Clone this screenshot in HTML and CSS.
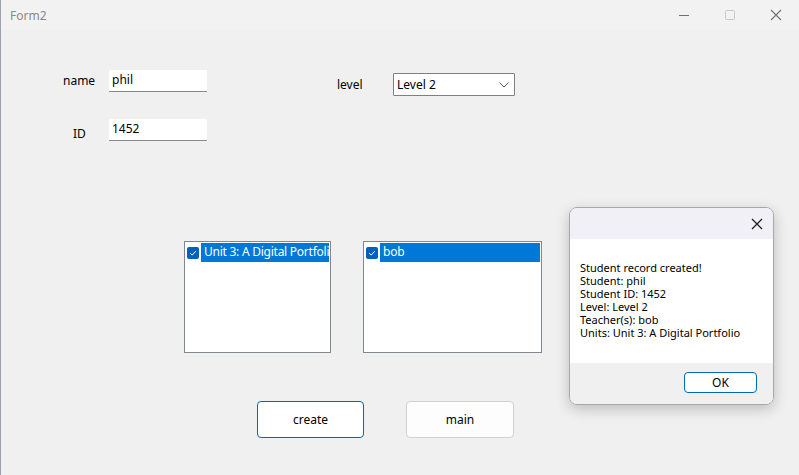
FILE: index.html
```html
<!DOCTYPE html>
<html>
<head>
<meta charset="utf-8">
<link rel="stylesheet" href="styles.css">
</head>
<body>
<div class="window">
  <div class="titlebar">
    <span class="title">Form2</span>
    <div class="controls">
      <span class="ctl"><svg width="12" height="12" viewBox="0 0 12 12"><path d="M1 6.5h10" stroke="#707070" stroke-width="1"/></svg></span>
      <span class="ctl"><svg width="12" height="12" viewBox="0 0 12 12"><rect x="1.5" y="1.5" width="9" height="9" rx="1" fill="none" stroke="#c8c8c8" stroke-width="1"/></svg></span>
      <span class="ctl"><svg width="12" height="12" viewBox="0 0 12 12"><path d="M1 1L11 11M11 1L1 11" stroke="#707070" stroke-width="1.1"/></svg></span>
    </div>
  </div>
  <div class="client">
    <div class="fields">
      <div class="left-col">
        <div class="row">
          <span class="label lbl-name">name</span>
          <div class="textbox">phil</div>
        </div>
        <div class="row row-id">
          <span class="label lbl-id">ID</span>
          <div class="textbox">1452</div>
        </div>
      </div>
      <div class="level-group">
        <span class="label lbl-level">level</span>
        <div class="combo">
          <span>Level 2</span>
          <svg class="chev" width="10" height="6" viewBox="0 0 10 6"><path d="M0.5 0.5L5 5L9.5 0.5" fill="none" stroke="#505050" stroke-width="1"/></svg>
        </div>
      </div>
    </div>
    <div class="lists">
      <div class="listbox lb-units">
        <div class="item">
          <span class="check"><svg width="12" height="12" viewBox="0 0 12 12"><path d="M3.2 6.2L5.2 8.1L8.8 4.2" fill="none" stroke="#fff" stroke-width="1"/></svg></span>
          <span class="item-text">Unit 3: A Digital Portfolio</span>
        </div>
      </div>
      <div class="listbox lb-teachers">
        <div class="item">
          <span class="check"><svg width="12" height="12" viewBox="0 0 12 12"><path d="M3.2 6.2L5.2 8.1L8.8 4.2" fill="none" stroke="#fff" stroke-width="1"/></svg></span>
          <span class="item-text">bob</span>
        </div>
      </div>
    </div>
    <div class="buttons">
      <button class="btn btn-primary">create</button>
      <button class="btn btn-main">main</button>
    </div>
  </div>
  <div class="dialog">
    <div class="dlg-head">
      <svg width="12" height="12" viewBox="0 0 12 12"><path d="M1 1L11 11M11 1L1 11" stroke="#1a1a1a" stroke-width="1.2"/></svg>
    </div>
    <div class="dlg-body">
      <div class="msg">Student record created!</div>
      <div class="msg">Student: phil</div>
      <div class="msg">Student ID: 1452</div>
      <div class="msg">Level: Level 2</div>
      <div class="msg">Teacher(s): bob</div>
      <div class="msg">Units: Unit 3: A Digital Portfolio</div>
    </div>
    <div class="dlg-foot">
      <button class="ok">OK</button>
    </div>
  </div>
</div>
</body>
</html>
```

FILE: styles.css
```css
* { box-sizing: border-box; }
html, body {
  margin: 0;
  padding: 0;
  width: 799px;
  height: 475px;
  overflow: hidden;
  background: #f0f0f0;
  font-family: "Noto Sans", "Open Sans", sans-serif;
  font-size: 12px;
  color: #000;
}
.window {
  position: relative;
  width: 799px;
  height: 475px;
  background: #f0f0f0;
  border-left: 1px solid #9aa3ad;
}
.titlebar {
  height: 30px;
  display: flex;
  align-items: center;
  justify-content: space-between;
  background: #f2f2f2;
}
.title {
  padding-left: 9px;
  color: #8a8a8a;
  font-size: 12px;
}
.controls {
  display: flex;
  height: 30px;
}
.ctl {
  width: 46px;
  display: flex;
  align-items: center;
  justify-content: center;
}
.client {
  display: flex;
  flex-direction: column;
}
.fields {
  display: flex;
  margin-top: 40px;
}
.left-col {
  display: flex;
  flex-direction: column;
  gap: 27px;
}
.row {
  display: flex;
  align-items: center;
}
.label {
  font-size: 12px;
  line-height: 14px;
}
.lbl-name { margin-left: 62px; width: 46px; }
.lbl-id { margin-left: 72px; width: 36px; padding-top: 8px; }
.textbox {
  width: 98px;
  height: 22px;
  background: #fff;
  border-bottom: 1px solid #8a8a8a;
  padding: 2px 0 0 3px;
  line-height: 16px;
}
.level-group {
  display: flex;
  align-items: center;
  align-self: flex-start;
  margin-left: 130px;
  margin-top: 3px;
}
.lbl-level { width: 56px; padding-top: 1px; }
.combo {
  width: 122px;
  height: 23px;
  background: #fff;
  border: 1px solid #7f7f7f;
  border-radius: 1px;
  display: flex;
  align-items: center;
  justify-content: space-between;
  padding: 0 5px 0 3px;
}
.lists {
  display: flex;
  margin-top: 100px;
  margin-left: 183px;
  gap: 32px;
}
.listbox {
  height: 112px;
  background: #fff;
  border: 1px solid #828790;
  padding: 1px;
}
.lb-units { width: 147px; }
.lb-teachers { width: 179px; }
.item {
  display: flex;
  align-items: center;
  height: 19px;
}
.check {
  width: 12px;
  height: 12px;
  margin: 0 2px 0 1px;
  background: #0060bf;
  border-radius: 2px;
  flex: none;
  display: flex;
}
.item-text {
  flex: 1;
  height: 19px;
  background: #0078d7;
  color: #fff;
  padding-left: 3px;
  line-height: 18px;
  letter-spacing: -0.25px;
  white-space: nowrap;
  overflow: hidden;
}
.buttons {
  display: flex;
  margin-top: 48px;
  margin-left: 256px;
  gap: 42px;
}
.btn {
  font-family: inherit;
  font-size: 12px;
  width: 107px;
  height: 37px;
  background: #fdfdfd;
  border: 1px solid #d0d0d0;
  border-radius: 4px;
  color: #000;
  padding: 0;
}
.btn-primary {
  border: 1px solid #0067c0;
  background: #fff;
}
.btn-main { width: 108px; }
.dialog {
  position: absolute;
  left: 568px;
  top: 207px;
  width: 205px;
  height: 198px;
  border: 1px solid #a8a8a8;
  border-radius: 8px;
  overflow: hidden;
  box-shadow: 0 4px 14px rgba(0,0,0,0.22);
  display: flex;
  flex-direction: column;
}
.dlg-head {
  height: 31px;
  background: #f1f0f6;
  display: flex;
  align-items: center;
  justify-content: flex-end;
  padding-right: 10px;
}
.dlg-body {
  height: 124px;
  background: #fff;
  padding: 22px 0 0 10px;
}
.msg {
  font-size: 11px;
  line-height: 13px;
  height: 13px;
  white-space: nowrap;
}
.dlg-foot {
  flex: 1;
  background: #f0f0f0;
  display: flex;
  justify-content: flex-end;
  align-items: flex-start;
  padding: 9px 16px 0 0;
}
.ok {
  font-family: inherit;
  font-size: 12px;
  width: 73px;
  height: 21px;
  background: #fff;
  border: 1px solid #0067c0;
  border-radius: 4px;
  padding: 0;
  color: #000;
}
```
